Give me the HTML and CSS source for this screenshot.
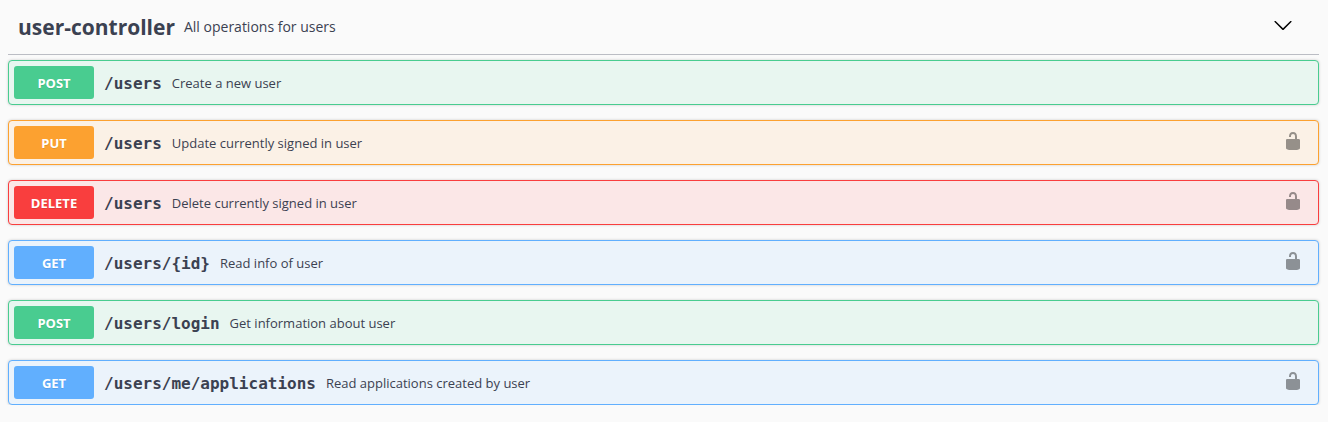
FILE: index.html
```html
<!DOCTYPE html>
<html lang="en">
<head>
<meta charset="utf-8">
<title>user-controller</title>
<link rel="stylesheet" href="styles.css">
</head>
<body>
<svg width="0" height="0" class="sprite" aria-hidden="true">
  <symbol id="unlocked" viewBox="0 0 20 20">
    <path d="M15.8 8H14V5.6C14 2.703 12.665 1 10 1 7.334 1 6 2.703 6 5.6V6h2v-.801C8 3.754 8.797 3 10 3c1.203 0 2 .754 2 2.199V8H4c-.553 0-1 .646-1 1.199V17c0 .549.428 1.139.951 1.307l1.197.387C5.672 18.861 6.55 19 7.1 19h5.8c.549 0 1.428-.139 1.951-.307l1.196-.387c.524-.167.953-.757.953-1.306V9.199C17 8.646 16.352 8 15.8 8z"/>
  </symbol>
</svg>
<main class="section">
  <header class="tag">
    <h1 class="tag-name">user-controller</h1>
    <p class="tag-description">All operations for users</p>
    <button class="toggle" aria-label="Collapse section">
      <svg width="20" height="20" viewBox="0 0 20 20"><path d="M17.418 6.109c.272-.268.709-.268.979 0s.271.701 0 .969l-7.908 7.83c-.27.268-.707.268-.979 0l-7.908-7.83c-.27-.268-.27-.701 0-.969.271-.268.709-.268.979 0L10 13.25l7.418-7.141z"/></svg>
    </button>
  </header>
  <div class="operations">
    <div class="op post"><button class="method">POST</button><a class="path" href="#">/users</a><span class="summary">Create a new user</span></div>
    <div class="op put"><button class="method">PUT</button><a class="path" href="#">/users</a><span class="summary">Update currently signed in user</span><button class="lock" aria-label="Authorize"><svg width="20" height="20"><use href="#unlocked"/></svg></button></div>
    <div class="op delete"><button class="method">DELETE</button><a class="path" href="#">/users</a><span class="summary">Delete currently signed in user</span><button class="lock" aria-label="Authorize"><svg width="20" height="20"><use href="#unlocked"/></svg></button></div>
    <div class="op get"><button class="method">GET</button><a class="path" href="#">/users/{id}</a><span class="summary">Read info of user</span><button class="lock" aria-label="Authorize"><svg width="20" height="20"><use href="#unlocked"/></svg></button></div>
    <div class="op post"><button class="method">POST</button><a class="path" href="#">/users/login</a><span class="summary">Get information about user</span></div>
    <div class="op get"><button class="method">GET</button><a class="path" href="#">/users/me/applications</a><span class="summary">Read applications created by user</span><button class="lock" aria-label="Authorize"><svg width="20" height="20"><use href="#unlocked"/></svg></button></div>
  </div>
</main>
</body>
</html>
```
FILE: styles.css
```css
* { box-sizing: border-box; }
body { margin: 0; background: #fafafa; color: #3b4151; font-family: "Open Sans", sans-serif; }
button { border: 0; background: none; padding: 0; font: inherit; color: inherit; cursor: pointer; }
svg { display: block; }
.sprite { position: absolute; }
.section { padding: 0 9px 0 8px; }
.tag { display: flex; align-items: center; min-height: 55px; padding: 0 26px 0 10px; border-bottom: 1px solid #bbbdc4; }
.tag-name { margin: 0; font-size: 21px; line-height: 32px; font-weight: 700; }
.tag-description { margin: 0; padding-left: 9px; flex: 1; font-size: 14px; line-height: 20px; }
.toggle { padding-bottom: 4px; }
.operations { display: grid; gap: 15px; padding-top: 5px; }
.op { display: flex; align-items: center; min-height: 45px; padding: 5px 15px 5px 5px; border: 1px solid var(--accent); border-radius: 4px; background: var(--tint); box-shadow: 0 0 3px rgba(0, 0, 0, 0.19); }
.post { --accent: #49cc90; --tint: #e8f6f0; }
.put { --accent: #fca130; --tint: #fbf1e6; }
.delete { --accent: #f93e3e; --tint: #fbe7e7; }
.get { --accent: #61affe; --tint: #ebf3fb; }
.method { width: 80px; height: 33px; border-radius: 3px; background: var(--accent); color: #fff; font: 700 13px "Open Sans", sans-serif; text-shadow: 0 1px 0 rgba(0, 0, 0, 0.1); }
.path { padding: 2px 10px 0; color: #3b4151; font: 700 16px "DejaVu Sans Mono", monospace; text-decoration: none; }
.summary { flex: 1; font-size: 13px; line-height: 18px; }
.lock { padding-bottom: 4px; fill: #000; opacity: 0.4; }
```
